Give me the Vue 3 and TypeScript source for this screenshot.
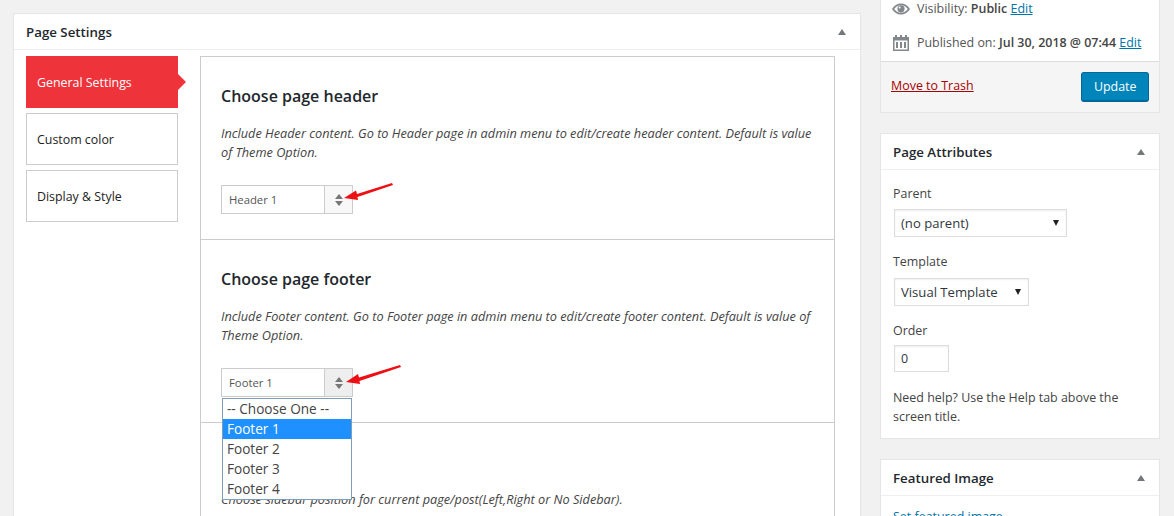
<script setup lang="ts">
const tabs: string[] = ['General Settings', 'Custom color', 'Display & Style']
const options: string[] = ['-- Choose One --', 'Footer 1', 'Footer 2', 'Footer 3', 'Footer 4']
</script>

<template>
  <div class="page">
    <main class="main-col">
      <section class="box settings">
        <header class="box-head settings-head">
          <h2>Page Settings</h2>
          <span class="caret"></span>
        </header>
        <div class="settings-body">
          <nav class="tabs">
            <div
              v-for="(t, i) in tabs"
              :key="t"
              class="tab"
              :class="{ active: i === 0 }"
            >{{ t }}</div>
          </nav>
          <div class="panel">
            <div class="field">
              <h3>Choose page header</h3>
              <p class="desc">Include Header content. Go to Header page in admin menu to edit/create header content. Default is value of Theme Option.</p>
              <div class="fancy">
                <span class="fancy-value">Header 1</span>
                <span class="fancy-btn"><i class="up"></i><i class="down"></i></span>
                <svg class="arrow arrow-one" width="54" height="22" viewBox="0 0 54 22">
                  <path d="M50 1 L15 12 L14 8.500 L2 16 L16 18 L15.500 15 L51 3 Z" fill="#ee0f14" />
                </svg>
              </div>
            </div>
            <div class="field">
              <h3>Choose page footer</h3>
              <p class="desc">Include Footer content. Go to Footer page in admin menu to edit/create footer content. Default is value of Theme Option.</p>
              <div class="fancy">
                <span class="fancy-value">Footer 1</span>
                <span class="fancy-btn open"><i class="up"></i><i class="down"></i></span>
                <svg class="arrow arrow-two" width="60" height="24" viewBox="0 0 60 24">
                  <path d="M56 1 L15 13.500 L14 10 L2 18 L16 20 L15.500 17 L57 3 Z" fill="#ee0f14" />
                </svg>
                <ul class="menu">
                  <li v-for="(o, i) in options" :key="o" :class="{ sel: i === 1 }">{{ o }}</li>
                </ul>
              </div>
            </div>
            <div class="field last">
              <p class="desc">Choose sidebar position for current page/post(Left,Right or No Sidebar).</p>
            </div>
          </div>
        </div>
      </section>
    </main>

    <aside class="side-col">
      <section class="box publish">
        <div class="misc">
          <div class="misc-row vis">
            <svg class="mi" width="20" height="20" viewBox="0 0 20 20">
              <path fill="#82878c" fill-rule="evenodd" d="M1 10C3 6.500 6.300 4.500 10 4.500S17 6.500 19 10c-2 3.500-5.300 5.500-9 5.500S3 13.500 1 10zM3.200 10c1.600 2.300 3.900 3.800 6.800 3.800s5.200-1.500 6.800-3.800C15.200 7.700 12.900 6.200 10 6.200S4.800 7.700 3.200 10z"/>
              <circle cx="10" cy="9.800" r="3.600" fill="#82878c"/>
              <circle cx="8.600" cy="8.500" r="1" fill="#fff"/>
            </svg>
            <span>Visibility: <b>Public</b> <a>Edit</a></span>
          </div>
          <div class="misc-row pub">
            <svg class="mi" width="20" height="20" viewBox="0 0 20 20"><path fill="#82878c" d="M4 2h2v2h3V2h2v2h3V2h2v2h2v14H2V4h2V2zM3.500 7.500v9h13v-9h-13zM5 9h2v6H5V9zm4 0h2v6H9V9zm4 0h2v6h-2V9z"/></svg>
            <span>Published on: <b>Jul 30, 2018 @ 07:44</b> <a>Edit</a></span>
          </div>
        </div>
        <div class="actions">
          <a class="trash">Move to Trash</a>
          <span class="update">Update</span>
        </div>
      </section>

      <section class="box attrs">
        <header class="box-head side-head">
          <h2>Page Attributes</h2>
          <span class="caret"></span>
        </header>
        <div class="attrs-body">
          <div class="label">Parent</div>
          <div class="sel-box parent"><span>(no parent)</span><i></i></div>
          <div class="label">Template</div>
          <div class="sel-box template"><span>Visual Template</span><i></i></div>
          <div class="label">Order</div>
          <div class="num-box">0</div>
          <p class="help">Need help? Use the Help tab above the screen title.</p>
        </div>
      </section>

      <section class="box featured">
        <header class="box-head side-head">
          <h2>Featured Image</h2>
          <span class="caret"></span>
        </header>
        <div class="featured-body"><a>Set featured image</a></div>
      </section>
    </aside>
  </div>
</template>

<style>
html, body { margin: 0; background: #f1f1f1; }
</style>

<style scoped>
.page {
  display: flex;
  align-items: flex-start;
  height: 516px;
  overflow: hidden;
  background: #f1f1f1;
  font-family: "Open Sans", sans-serif;
  font-size: 12.450px;
  color: #444;
}
.main-col { width: 846px; margin: 14px 0 0 14px; flex: none; }
.side-col { width: 278px; margin-left: 21px; flex: none; }
.box {
  background: #fff;
  box-shadow: 0 0 0 1px #e5e5e5, 0 1px 1px rgba(0, 0, 0, .04);
}
.box-head {
  display: flex;
  justify-content: space-between;
  align-items: center;
  border-bottom: 1px solid #eee;
}
h2 { margin: 0; font-size: 13.300px; font-weight: 600; color: #23282d; }
.settings-head { height: 35px; padding: 0 12px; }
.side-head { height: 35px; padding: 0 12px; }
.caret {
  width: 0; height: 0;
  border-left: 4.500px solid transparent;
  border-right: 4.500px solid transparent;
  border-bottom: 6px solid #72777c;
  margin-right: 2px;
}
.settings-body { display: flex; padding: 6px 25px 0 12px; }
.tabs { width: 152px; flex: none; display: flex; flex-direction: column; gap: 5px; }
.tab {
  position: relative;
  height: 52px;
  box-sizing: border-box;
  border: 1px solid #ccc;
  padding-left: 10px;
  line-height: 52px;
  color: #222;
  font-size: 12.400px;
}
.tab.active { background: #ee333b; border-color: #ee333b; color: #fff; }
.tab.active::after {
  content: "";
  position: absolute;
  left: 151px;
  top: 17px;
  border-left: 8px solid #ee333b;
  border-top: 8px solid transparent;
  border-bottom: 8px solid transparent;
}
.panel { margin-left: 22px; width: 635px; box-sizing: border-box; border: 1px solid #ccc; border-bottom: 0; }
.field { height: 183px; box-sizing: border-box; padding: 28px 20px 0; border-bottom: 1px solid #ccc; }
.field.last { border-bottom: 0; height: 120px; padding-top: 67px; }
.field.last .desc { margin: 0; }
h3 { margin: 0; font-size: 16px; font-weight: 600; color: #23282d; line-height: 22px; }
.desc { margin: 17px 0 0; font-style: italic; font-size: 12.720px; line-height: 18.500px; color: #444; }
.fancy {
  position: relative;
  display: flex;
  width: 132px;
  height: 29px;
  box-sizing: border-box;
  margin-top: 24px;
  border: 1px solid #ccc;
  font-size: 11.300px;
}
.fancy-value { flex: 1; padding-left: 7px; line-height: 27px; color: #555; }
.fancy-btn {
  width: 27px;
  flex: none;
  border-left: 1px solid #ccc;
  background: #f8f8f8;
  display: flex;
  flex-direction: column;
  align-items: center;
  justify-content: center;
  gap: 2px;
}
.fancy-btn.open { background: #eee; }
.fancy-btn i { width: 0; height: 0; border-left: 4px solid transparent; border-right: 4px solid transparent; }
.fancy-btn .up { border-bottom: 5px solid #777; }
.fancy-btn .down { border-top: 5px solid #777; }
.arrow { position: absolute; }
.arrow-one { left: 120px; top: -4px; }
.arrow-two { left: 122px; top: -5px; }
.menu {
  position: absolute;
  left: 0;
  top: 29px;
  width: 130px;
  box-sizing: border-box;
  margin: 0;
  padding: 0;
  list-style: none;
  background: #fff;
  border: 1px solid #7f9db9;
  font-size: 13.600px;
  z-index: 2;
}
.menu li { height: 20px; line-height: 20px; padding-left: 4px; color: #444; }
.menu li.sel { background: #1e90ff; color: #fff; }

.publish { box-shadow: 0 0 0 1px #e5e5e5; }
.misc { height: 62px; box-sizing: border-box; border-bottom: 1px solid #ddd; }
.misc-row { display: flex; align-items: center; gap: 6px; padding-left: 10px; line-height: 18px; color: #555; }
.misc-row b { font-weight: 600; color: #444; }
.misc-row.vis { height: 18px; }
.misc-row.pub { height: 18px; margin-top: 16px; }
.mi { flex: none; }
a { color: #0073aa; text-decoration: underline; }
.actions {
  height: 50px;
  box-sizing: border-box;
  padding: 10px 10px 0;
  background: #f5f5f5;
  display: flex;
  justify-content: space-between;
  align-items: flex-start;
}
.trash { color: #a00; margin-top: 5px; }
.update {
  height: 30px;
  padding: 0 11.500px;
  line-height: 28px;
  box-sizing: border-box;
  border: 1px solid #006799;
  border-bottom-width: 2px;
  border-radius: 3px;
  background: #0085ba;
  color: #fff;
}
.attrs { margin-top: 22px; }
.attrs-body { padding: 14px 12px 12px; }
.label { padding-top: 1px; line-height: 18px; color: #444; }
.sel-box {
  position: relative;
  box-sizing: border-box;
  height: 28px;
  margin: 6px 0 15px 1px;
  padding-left: 6px;
  border: 1px solid #ddd;
  box-shadow: inset 0 1px 2px rgba(0, 0, 0, .07);
  line-height: 26px;
  color: #32373c;
  font-size: 13.100px;
}
.sel-box.parent { width: 173px; }
.sel-box.template { width: 135px; margin-top: 7px; }
.sel-box i {
  position: absolute;
  right: 7px;
  top: 10px;
  border-left: 3.500px solid transparent;
  border-right: 3.500px solid transparent;
  border-top: 6px solid #222;
}
.num-box {
  box-sizing: border-box;
  width: 55px;
  height: 27px;
  margin: 5px 0 0 1px;
  padding-left: 6px;
  border: 1px solid #ddd;
  box-shadow: inset 0 1px 2px rgba(0, 0, 0, .07);
  line-height: 25px;
  color: #32373c;
}
.help { margin: 16px 0 0; line-height: 19px; color: #444; }
.featured { margin-top: 22px; }
.featured-body { padding: 12px; }
</style>
